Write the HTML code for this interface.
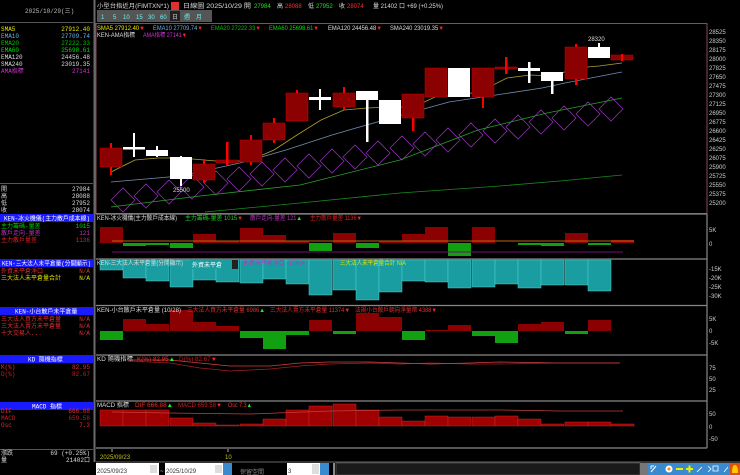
<!DOCTYPE html>
<html><head><meta charset="utf-8">
<style>
html,body{margin:0;padding:0;background:#000;width:740px;height:475px;overflow:hidden}
svg{display:block}
text{font-family:"Liberation Sans","Noto Sans CJK TC",sans-serif;font-size:6px}
.m{font-family:"Liberation Mono","Noto Sans CJK TC",monospace;font-size:6px}
.r{text-anchor:end}
</style></head><body>
<svg width="740" height="475" viewBox="0 0 740 475" xmlns="http://www.w3.org/2000/svg">
<rect width="740" height="475" fill="#000"/>
<!-- left panel -->
<line x1="94.5" y1="0" x2="94.5" y2="462" stroke="#6a6a6a" stroke-width="2"/>
<line x1="0" y1="22.5" x2="93" y2="22.5" stroke="#555"/>
<text x="25" y="13" class="m" fill="#bbb">2025/10/29(三)</text>
<text x="1" y="31" fill="#e8e800" class="m">SMA5</text><text x="90" y="31" fill="#e8e800" class="m r">27912.40</text>
<text x="1" y="38" fill="#6aaee8" class="m">EMA10</text><text x="90" y="38" fill="#6aaee8" class="m r">27709.74</text>
<text x="1" y="45" fill="#00c000" class="m">EMA20</text><text x="90" y="45" fill="#00c000" class="m r">27222.33</text>
<text x="1" y="52" fill="#00e000" class="m">EMA60</text><text x="90" y="52" fill="#00e000" class="m r">25698.61</text>
<text x="1" y="59" fill="#ddd" class="m">EMA120</text><text x="90" y="59" fill="#ddd" class="m r">24456.48</text>
<text x="1" y="66" fill="#ddd" class="m">SMA240</text><text x="90" y="66" fill="#ddd" class="m r">23019.35</text>
<text x="1" y="73" fill="#d030d0" class="m">AMA指標</text><text x="90" y="73" fill="#d030d0" class="m r">27141</text>
<line x1="0" y1="183.5" x2="93" y2="183.5" stroke="#555"/>
<text x="1" y="191" class="m" fill="#ddd">開</text><text x="90" y="191" class="m r" fill="#ddd">27984</text>
<text x="1" y="198" class="m" fill="#ddd">高</text><text x="90" y="198" class="m r" fill="#ddd">28088</text>
<text x="1" y="205" class="m" fill="#ddd">低</text><text x="90" y="205" class="m r" fill="#ddd">27952</text>
<text x="1" y="212" class="m" fill="#ddd">收</text><text x="90" y="212" class="m r" fill="#ddd">28074</text>
<rect x="0" y="214" width="93" height="8" fill="#1a1aff"/><text x="4" y="220.5" class="m" fill="#fff" textLength="86" lengthAdjust="spacingAndGlyphs">KEN-冰火機儀(主力散戶成本線)</text>
<text x="1" y="228" class="m" fill="#00d000">主力籌碼-量差</text><text x="90" y="228" class="m r" fill="#00d000">1015</text>
<text x="1" y="235" class="m" fill="#c030c0">散戶走向-量差</text><text x="90" y="235" class="m r" fill="#c030c0">121</text>
<text x="1" y="242" class="m" fill="#e02020">主力散戶量差</text><text x="90" y="242" class="m r" fill="#e02020">1136</text>
<rect x="0" y="259" width="93" height="8" fill="#1a1aff"/><text x="2" y="265.5" class="m" fill="#fff" textLength="89" lengthAdjust="spacingAndGlyphs">KEN-三大法人未平倉量(分開顯示)</text>
<text x="1" y="273" class="m" fill="#e03030">外資未平倉淨口</text><text x="90" y="273" class="m r" fill="#e03030">N/A</text>
<text x="1" y="280" class="m" fill="#e0e000">三大法人未平倉量合計</text><text x="90" y="280" class="m r" fill="#e0e000">N/A</text>
<rect x="0" y="307" width="93" height="8" fill="#1a1aff"/><text x="15" y="313.5" class="m" fill="#fff">KEN-小台散戶未平倉量</text>
<text x="1" y="321" class="m" fill="#e03030">三大法人買方未平倉量</text><text x="90" y="321" class="m r" fill="#e03030">N/A</text>
<text x="1" y="328" class="m" fill="#e03030">三大法人賣方未平倉量</text><text x="90" y="328" class="m r" fill="#e03030">N/A</text>
<text x="1" y="335" class="m" fill="#e03030">十大交易人...</text><text x="90" y="335" class="m r" fill="#e03030">N/A</text>
<rect x="0" y="355" width="93" height="8" fill="#1a1aff"/><text x="28" y="361.5" class="m" fill="#fff">KD 隨機指標</text>
<text x="1" y="369" class="m" fill="#e03030">K(%)</text><text x="90" y="369" class="m r" fill="#e03030">82.95</text>
<text x="1" y="376" class="m" fill="#c02020">D(%)</text><text x="90" y="376" class="m r" fill="#c02020">82.67</text>
<rect x="0" y="402" width="93" height="8" fill="#1a1aff"/><text x="32" y="408.5" class="m" fill="#fff">MACD 指標</text>
<text x="1" y="413" class="m" fill="#e03030">DIF</text><text x="90" y="413" class="m r" fill="#e03030">666.88</text>
<text x="1" y="420" class="m" fill="#c02020">MACD</text><text x="90" y="420" class="m r" fill="#c02020">659.58</text>
<text x="1" y="427" class="m" fill="#e03030">Osc</text><text x="90" y="427" class="m r" fill="#e03030">7.3</text>
<line x1="0" y1="449.5" x2="93" y2="449.5" stroke="#555"/>
<text x="1" y="455" class="m" fill="#ddd">漲跌</text><text x="90" y="455" class="m r" fill="#ddd">69 (+0.25%)</text>
<text x="1" y="462" class="m" fill="#ddd">量</text><text x="90" y="462" class="m r" fill="#ddd">21402口</text>

<!-- title -->
<text x="97" y="8" fill="#ddd" font-size="7" textLength="72" lengthAdjust="spacingAndGlyphs">小型台指近月(FIMTXN*1)</text>
<rect x="171" y="2" width="8" height="8" fill="#e03030"/>
<text x="183" y="8" fill="#ddd" font-size="7" textLength="68" lengthAdjust="spacingAndGlyphs">日線圖  2025/10/29  開</text>
<text x="254" y="8" fill="#20e020" font-size="7">27984</text><text x="277" y="8" fill="#ddd" font-size="7">高</text>
<text x="285" y="8" fill="#ff3030" font-size="7">28088</text><text x="308" y="8" fill="#ddd" font-size="7">低</text>
<text x="316" y="8" fill="#20e020" font-size="7">27952</text><text x="339" y="8" fill="#ddd" font-size="7">收</text>
<text x="347" y="8" fill="#ff3030" font-size="7">28074</text><text x="373" y="8" fill="#ddd" font-size="7">量 21402 口  +69 (+0.25%)</text>
<g font-size="7">
<rect x="97" y="10" width="115" height="12" fill="#555"/>
<g fill="#6ee">
<text x="101" y="19" font-size="7">1</text><text x="113" y="19" font-size="7">5</text><text x="123" y="19" font-size="7">10</text><text x="136" y="19" font-size="7">15</text><text x="148" y="19" font-size="7">30</text><text x="160" y="19" font-size="7">60</text></g>
<rect x="170" y="11" width="10" height="10" fill="#222"/><text x="172" y="19" fill="#ccc" font-size="7">日</text>
<text x="184" y="19" fill="#6ee" font-size="7">週</text><text x="196" y="19" fill="#6ee" font-size="7">月</text>
</g>
<!-- main chart frame -->
<rect x="96" y="23.5" width="611" height="190" fill="none" stroke="#8a4a5a"/>
<text x="97" y="30" fill="#e8e800" textLength="48" lengthAdjust="spacingAndGlyphs">SMA5 27912.40<tspan fill="#f22">▼</tspan></text>
<text x="153" y="30" fill="#6aaee8" textLength="50" lengthAdjust="spacingAndGlyphs">EMA10 27709.74<tspan fill="#f22">▼</tspan></text>
<text x="211" y="30" fill="#00c000" textLength="50" lengthAdjust="spacingAndGlyphs">EMA20 27222.33<tspan fill="#f22">▼</tspan></text>
<text x="269" y="30" fill="#00e000" textLength="50" lengthAdjust="spacingAndGlyphs">EMA60 25698.61<tspan fill="#f22">▼</tspan></text>
<text x="328" y="30" fill="#ddd" textLength="54" lengthAdjust="spacingAndGlyphs">EMA120 24456.48<tspan fill="#f22">▼</tspan></text>
<text x="390" y="30" fill="#ddd" textLength="54" lengthAdjust="spacingAndGlyphs">SMA240 23019.35<tspan fill="#f22">▼</tspan></text>
<text x="97" y="37" fill="#ddd" textLength="38" lengthAdjust="spacingAndGlyphs">KEN-AMA指標</text>
<text x="143" y="37" fill="#d030d0" textLength="44" lengthAdjust="spacingAndGlyphs">AMA指標 27141<tspan fill="#f22">▼</tspan></text>
<!-- y axis main -->
<g fill="#ccc">
<text x="709" y="34">28525</text><text x="709" y="43">28350</text><text x="709" y="52">28175</text><text x="709" y="61">28000</text>
<text x="709" y="70">27825</text><text x="709" y="79">27650</text><text x="709" y="88">27475</text><text x="709" y="97">27300</text>
<text x="709" y="106">27125</text><text x="709" y="115">26950</text><text x="709" y="124">26775</text><text x="709" y="133">26600</text>
<text x="709" y="142">26425</text><text x="709" y="151">26250</text><text x="709" y="160">26075</text><text x="709" y="169">25900</text>
<text x="709" y="178">25725</text><text x="709" y="187">25550</text><text x="709" y="196">25375</text><text x="709" y="205">25200</text>
</g>
<!-- diamonds -->
<g fill="none" stroke="#8a30b0" stroke-width="0.8">
<path d="M111 200 l12 -12 l12 12 l-12 12z M134 196 l12 -12 l12 12 l-12 12z M157 192 l12 -12 l12 12 l-12 12z M180 187 l12 -12 l12 12 l-12 12z M204 183 l12 -12 l12 12 l-12 12z M227 179 l12 -12 l12 12 l-12 12z M250 174 l12 -12 l12 12 l-12 12z M273 170 l12 -12 l12 12 l-12 12z M297 166 l12 -12 l12 12 l-12 12z M320 161 l12 -12 l12 12 l-12 12z M343 157 l12 -12 l12 12 l-12 12z M366 153 l12 -12 l12 12 l-12 12z M390 148 l12 -12 l12 12 l-12 12z M413 144 l12 -12 l12 12 l-12 12z M436 140 l12 -12 l12 12 l-12 12z M459 135 l12 -12 l12 12 l-12 12z M483 131 l12 -12 l12 12 l-12 12z M506 127 l12 -12 l12 12 l-12 12z M529 122 l12 -12 l12 12 l-12 12z M552 118 l12 -12 l12 12 l-12 12z M576 114 l12 -12 l12 12 l-12 12z M599 109 l12 -12 l12 12 l-12 12z"/>
</g>
<!-- MA lines -->
<polyline fill="none" stroke="#1a8a1a" stroke-width="0.8" points="205,212 300,203 400,193 500,186 560,181 622,175"/>
<polyline fill="none" stroke="#2aa02a" stroke-width="0.8" points="111,207 200,196 300,185 400,160 478,130 547,113 622,98"/>
<polyline fill="none" stroke="#7090b0" stroke-width="0.8" points="111,182 180,176 240,163 286,150 332,135 356,128 402,115 449,102 496,95 542,88 565,83 622,72"/>
<polyline fill="none" stroke="#b0a030" stroke-width="0.8" points="111,172 135,160 158,158 181,158 204,160 228,162 251,160 274,150 297,135 321,120 344,110 367,108 390,107 414,107 437,96 460,96 483,90 507,78 530,75 553,76 576,68 599,66 622,63"/>
<!-- candles -->
<g fill="#8b0000" stroke="#c00" stroke-width="0.5">
<rect x="100" y="148" width="22" height="19"/>
<rect x="193" y="164" width="22" height="16"/>
<rect x="216" y="160" width="22" height="3"/>
<rect x="240" y="140" width="22" height="22"/>
<rect x="263" y="123" width="22" height="17"/>
<rect x="286" y="93" width="22" height="28"/>
<rect x="333" y="93" width="22" height="14"/>
<rect x="402" y="94" width="22" height="24"/>
<rect x="425" y="68" width="22" height="29"/>
<rect x="472" y="68" width="22" height="29"/>
<rect x="495" y="67" width="22" height="2"/>
<rect x="565" y="47" width="22" height="32"/>
<rect x="611" y="55" width="22" height="5"/>
</g>
<g fill="#f00">
<rect x="110" y="143" width="2" height="5"/><rect x="110" y="167" width="2" height="8"/>
<rect x="203" y="159" width="2" height="5"/><rect x="203" y="180" width="2" height="3"/>
<rect x="226" y="142" width="2.5" height="23"/>
<rect x="250" y="135" width="2" height="5"/><rect x="250" y="162" width="2" height="3"/>
<rect x="273" y="118" width="2" height="5"/><rect x="273" y="140" width="2" height="3"/>
<rect x="296" y="90" width="2" height="3"/>
<rect x="343" y="87" width="2" height="6"/><rect x="343" y="107" width="2" height="3"/>
<rect x="412" y="118" width="2.5" height="13"/>
<rect x="482" y="97" width="2" height="11"/>
<rect x="505" y="57" width="2.5" height="17"/>
<rect x="575" y="44" width="2" height="3"/><rect x="575" y="79" width="2.5" height="6"/>
<rect x="621" y="54" width="2" height="7"/>
</g>
<g fill="#fff">
<rect x="123" y="147" width="22" height="2.5"/><rect x="133" y="133" width="2" height="24"/>
<rect x="146" y="150" width="22" height="6"/><rect x="156" y="146" width="2" height="11"/>
<rect x="170" y="157" width="22" height="22"/><rect x="180" y="156" width="2" height="30"/>
<rect x="309" y="97" width="22" height="3"/><rect x="319" y="89" width="2" height="21"/>
<rect x="356" y="91" width="22" height="9"/><rect x="366" y="91" width="2.5" height="51"/>
<rect x="379" y="100" width="22" height="24"/>
<rect x="448" y="68" width="22" height="29"/>
<rect x="518" y="68" width="22" height="3"/><rect x="528" y="62" width="2.5" height="21"/>
<rect x="541" y="72" width="22" height="9"/><rect x="551" y="72" width="2.5" height="22"/>
<rect x="588" y="47" width="22" height="11"/><rect x="598" y="43" width="2" height="5"/>
</g>
<text x="588" y="41" fill="#ddd" font-size="6.5">28320</text>
<text x="173" y="192" fill="#ddd" font-size="6.5">25500</text>

<!-- panel separators -->
<g stroke="#888" stroke-width="1.2">
<line x1="96" y1="214" x2="707" y2="214"/><line x1="96" y1="259" x2="707" y2="259"/>
<line x1="96" y1="305.5" x2="707" y2="305.5"/><line x1="96" y1="355" x2="707" y2="355"/>
<line x1="96" y1="401" x2="707" y2="401"/><line x1="96" y1="448" x2="707" y2="448"/>
<line x1="707" y1="214" x2="707" y2="448"/>
</g>
<line x1="96" y1="462" x2="740" y2="462" stroke="#666"/>
<!-- panel2 -->
<g fill="#8b0000">
<rect x="100" y="227" width="23" height="16"/><rect x="193" y="234" width="23" height="9"/><rect x="216" y="241" width="23" height="2"/>
<rect x="240" y="228" width="23" height="15"/><rect x="263" y="235" width="23" height="8"/><rect x="286" y="241" width="23" height="2"/>
<rect x="333" y="233" width="23" height="10"/><rect x="379" y="241" width="23" height="2"/><rect x="402" y="234" width="23" height="9"/>
<rect x="425" y="227" width="23" height="16"/><rect x="472" y="227" width="23" height="16"/><rect x="565" y="233" width="23" height="10"/>
<rect x="611" y="240" width="23" height="3"/>
</g>
<g fill="#10a010">
<rect x="123" y="243" width="23" height="3"/><rect x="146" y="243" width="23" height="2"/><rect x="170" y="243" width="23" height="5"/>
<rect x="309" y="243" width="23" height="8"/><rect x="356" y="243" width="23" height="5"/><rect x="448" y="243" width="23" height="13"/>
<rect x="518" y="243" width="23" height="2"/><rect x="541" y="243" width="23" height="3"/><rect x="588" y="243" width="23" height="2"/>
</g>
<line x1="112" y1="241" x2="634" y2="241" stroke="#c06010" stroke-width="1"/>
<line x1="112" y1="252" x2="623" y2="252" stroke="#701070" stroke-width="1"/>
<text x="97" y="220" fill="#ddd" textLength="80" lengthAdjust="spacingAndGlyphs">KEN-冰火機儀(主力散戶成本線)</text>
<text x="185" y="220" fill="#20d020" textLength="58" lengthAdjust="spacingAndGlyphs">主力籌碼-量差 1015<tspan fill="#f22">▼</tspan></text>
<text x="250" y="220" fill="#c030c0" textLength="52" lengthAdjust="spacingAndGlyphs">散戶走向-量差 121<tspan fill="#2e2">▲</tspan></text>
<text x="310" y="220" fill="#e02020" textLength="52" lengthAdjust="spacingAndGlyphs">主力散戶量差 1136<tspan fill="#f22">▼</tspan></text>
<text x="709" y="232" fill="#ccc">5K</text><text x="709" y="246" fill="#ccc">0</text>
<!-- panel3 -->
<g fill="#1a9da0" stroke="#50d0d0" stroke-width="0.5">
<rect x="100" y="260" width="23" height="10"/><rect x="123" y="260" width="23" height="18"/><rect x="146" y="260" width="23" height="21"/>
<rect x="170" y="260" width="23" height="27"/><rect x="193" y="260" width="23" height="20"/><rect x="216" y="260" width="23" height="22"/>
<rect x="240" y="260" width="23" height="23"/><rect x="263" y="260" width="23" height="19"/><rect x="286" y="260" width="23" height="24"/>
<rect x="309" y="260" width="23" height="35"/><rect x="333" y="260" width="23" height="30"/><rect x="356" y="260" width="23" height="40"/>
<rect x="379" y="260" width="23" height="32"/><rect x="402" y="260" width="23" height="21"/><rect x="425" y="260" width="23" height="22"/>
<rect x="448" y="260" width="23" height="28"/><rect x="472" y="260" width="23" height="27"/><rect x="495" y="260" width="23" height="24"/>
<rect x="518" y="260" width="23" height="28"/><rect x="541" y="260" width="23" height="25"/><rect x="565" y="260" width="23" height="25"/>
<rect x="588" y="260" width="23" height="31"/>
</g>
<text x="97" y="265" fill="#ddd" textLength="86" lengthAdjust="spacingAndGlyphs">KEN-三大法人未平倉量(分開顯示)</text>
<rect x="190" y="260" width="42" height="9" fill="#1a9da0"/><text x="192" y="267" fill="#fff">外資未平倉</text>
<rect x="232" y="260" width="6" height="9" fill="#222"/>
<text x="243" y="265" fill="#c030c0" textLength="62" lengthAdjust="spacingAndGlyphs">外資未平倉淨口 -37404</text>
<text x="340" y="265" fill="#e0e000" textLength="66" lengthAdjust="spacingAndGlyphs">三大法人未平倉量合計 N/A</text>
<g fill="#ccc"><text x="709" y="271">-15K</text><text x="709" y="280">-20K</text><text x="709" y="289">-25K</text><text x="709" y="298">-30K</text></g>
<!-- panel4 -->
<g fill="#8b0000">
<rect x="123" y="319" width="23" height="12"/><rect x="146" y="324" width="23" height="7"/><rect x="170" y="310" width="23" height="21"/>
<rect x="193" y="322" width="23" height="9"/><rect x="216" y="326" width="23" height="5"/><rect x="309" y="320" width="23" height="11"/>
<rect x="356" y="313" width="23" height="18"/><rect x="379" y="317" width="23" height="14"/><rect x="425" y="330" width="23" height="1"/>
<rect x="448" y="325" width="23" height="6"/><rect x="518" y="324" width="23" height="7"/><rect x="541" y="322" width="23" height="9"/>
<rect x="588" y="320" width="23" height="11"/>
</g>
<g fill="#10a010">
<rect x="100" y="331" width="23" height="9"/><rect x="240" y="331" width="23" height="7"/><rect x="263" y="331" width="23" height="18"/>
<rect x="286" y="331" width="23" height="4"/><rect x="333" y="331" width="23" height="3"/><rect x="402" y="331" width="23" height="9"/>
<rect x="472" y="331" width="23" height="5"/><rect x="495" y="331" width="23" height="12"/><rect x="565" y="331" width="23" height="3"/>
</g>
<text x="97" y="312" fill="#ddd" textLength="84" lengthAdjust="spacingAndGlyphs">KEN-小台散戶未平倉量 (10/28)</text>
<text x="187" y="312" fill="#e03030" textLength="78" lengthAdjust="spacingAndGlyphs">三大法人買方未平倉量 6986<tspan fill="#2e2">▲</tspan></text>
<text x="270" y="312" fill="#e03030" textLength="80" lengthAdjust="spacingAndGlyphs">三大法人賣方未平倉量 11374<tspan fill="#f22">▼</tspan></text>
<text x="355" y="312" fill="#e03030" textLength="82" lengthAdjust="spacingAndGlyphs">法規小台散戶朝向淨量幣 4388<tspan fill="#f22">▼</tspan></text>
<g fill="#ccc"><text x="709" y="321">5K</text><text x="709" y="333">0</text><text x="709" y="345">-5K</text></g>
<!-- KD -->
<polyline fill="none" stroke="#a02020" stroke-width="0.8" points="130,361 170,363 200,368 230,371 270,369 300,366 330,364 370,363 400,364 430,363 470,364 500,364 560,363 620,363"/>
<polyline fill="none" stroke="#d04040" stroke-width="0.8" points="130,360 170,360 200,363 230,366 270,366 300,363 330,362 370,362 400,363 430,364 470,363 500,362 560,363 620,363"/>
<text x="97" y="361" fill="#ddd" textLength="36" lengthAdjust="spacingAndGlyphs">KD 隨機指標</text>
<text x="137" y="361" fill="#e03030" textLength="38" lengthAdjust="spacingAndGlyphs">K(%) 82.95<tspan fill="#2e2">▲</tspan></text>
<text x="179" y="361" fill="#c02020" textLength="38" lengthAdjust="spacingAndGlyphs">D(%) 82.67<tspan fill="#f22">▼</tspan></text>
<g fill="#ccc"><text x="709" y="370">75</text><text x="709" y="381">50</text><text x="709" y="392">25</text></g>
<!-- MACD -->
<g fill="#a00000" stroke="#d03030" stroke-width="0.4">
<rect x="100" y="410" width="23" height="16"/><rect x="123" y="410" width="23" height="16"/><rect x="146" y="410" width="23" height="16"/>
<rect x="170" y="418" width="23" height="8"/><rect x="193" y="423" width="23" height="3"/><rect x="216" y="425" width="23" height="1"/>
<rect x="240" y="424" width="23" height="2"/><rect x="263" y="419" width="23" height="7"/><rect x="286" y="410" width="23" height="16"/>
<rect x="309" y="406" width="23" height="20"/><rect x="333" y="404" width="23" height="22"/><rect x="356" y="410" width="23" height="16"/>
<rect x="379" y="417" width="23" height="9"/><rect x="402" y="421" width="23" height="5"/><rect x="425" y="416" width="23" height="10"/>
<rect x="448" y="417" width="23" height="9"/><rect x="472" y="417" width="23" height="9"/><rect x="495" y="416" width="23" height="10"/>
<rect x="518" y="419" width="23" height="7"/><rect x="541" y="424" width="23" height="2"/><rect x="565" y="422" width="23" height="4"/>
<rect x="588" y="422" width="23" height="4"/><rect x="611" y="424" width="23" height="2"/>
</g>
<polyline fill="none" stroke="#c04040" stroke-width="0.8" points="112,412 170,413 250,414 330,411 400,410 500,410 560,411 623,411"/>
<text x="97" y="407" fill="#ddd" textLength="32" lengthAdjust="spacingAndGlyphs">MACD 指標</text>
<text x="135" y="407" fill="#e03030" textLength="38" lengthAdjust="spacingAndGlyphs">DIF 666.88<tspan fill="#2e2">▲</tspan></text>
<text x="178" y="407" fill="#c02020" textLength="44" lengthAdjust="spacingAndGlyphs">MACD 659.58<tspan fill="#f22">▼</tspan></text>
<text x="228" y="407" fill="#e03030" textLength="24" lengthAdjust="spacingAndGlyphs">Osc 7.3<tspan fill="#2e2">▲</tspan></text>
<g fill="#ccc"><text x="709" y="416">50</text><text x="709" y="429">0</text><text x="709" y="441">-50</text></g>
<!-- date axis -->
<line x1="112" y1="449" x2="112" y2="452" stroke="#aaa"/><line x1="228" y1="449" x2="228" y2="452" stroke="#aaa"/>
<text x="100" y="459" fill="#c0c020" font-size="6.5">2025/09/23</text>
<text x="225" y="459" fill="#c0c020" font-size="6.5">10</text>
<!-- bottom bar -->
<rect x="96" y="463" width="63" height="12" fill="#fff"/><text x="97" y="473" fill="#333" font-size="9">2025/09/23</text>
<rect x="150" y="465" width="7" height="8" fill="#ddd"/>
<text x="160" y="473" fill="#ccc" font-size="8">~</text>
<rect x="165" y="463" width="58" height="12" fill="#fff"/><text x="166" y="473" fill="#333" font-size="9">2025/10/29</text>
<rect x="215" y="465" width="7" height="8" fill="#ddd"/>
<rect x="223" y="463" width="9" height="12" fill="#3a8ad0"/>
<text x="240" y="474" fill="#888" font-size="11">保留空間</text>
<rect x="287" y="463" width="33" height="12" fill="#fff"/><text x="288" y="473" fill="#333" font-size="9">3</text>
<rect x="312" y="464" width="7" height="10" fill="#ddd"/>
<rect x="320" y="463" width="9" height="12" fill="#3a8ad0"/>
<rect x="333" y="463" width="2" height="12" fill="#888"/>
<rect x="336" y="463" width="304" height="12" fill="#1a1a1a" stroke="#444"/>
<rect x="640" y="463" width="8" height="12" fill="#777"/>
<rect x="648" y="463" width="82" height="12" fill="#3a8ad0"/>
<circle cx="669" cy="469" r="3.5" fill="#fff"/><circle cx="669" cy="469" r="1.5" fill="#f80"/>
<rect x="676" y="468" width="7" height="2" fill="#ee0"/>
<rect x="686" y="468" width="7" height="2" fill="#ee0"/><rect x="688.5" y="465.5" width="2" height="7" fill="#ee0"/>
<path d="M651 472 l5 -6 M651 466 h3 M651 466 v3" stroke="#fff" stroke-width="1" fill="none"/>
<path d="M697 472 l5 -5 M708 466 l3 3 l-3 3" stroke="#fff" stroke-width="0.8" fill="none"/>
<path d="M713 466 h5 v5 h-5z M724 472 l4 -5" stroke="#fff" stroke-width="0.8" fill="none"/>
<rect x="730" y="463" width="10" height="12" fill="#e05010"/>
<path d="M732 473 q0 -8 3 -8 q3 0 3 8z" fill="#fc0"/>
</svg>
</body></html>
